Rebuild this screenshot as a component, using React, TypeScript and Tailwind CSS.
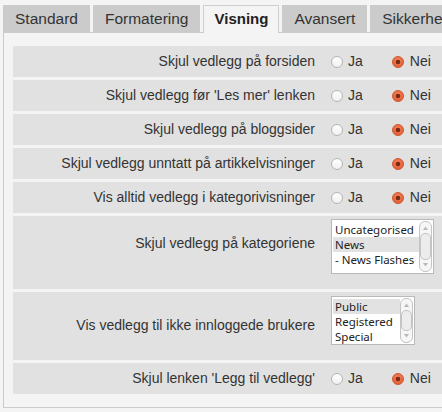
import React from "react";

const tabs = ["Standard", "Formatering", "Visning", "Avansert", "Sikkerhet"];

function Radio({ checked }: { checked?: boolean }) {
  if (checked) {
    return (
      <svg width="12" height="12" viewBox="0 0 12 12" className="shrink-0">
        <defs>
          <radialGradient id="rg" cx="50%" cy="40%" r="60%">
            <stop offset="0%" stopColor="#f58a60" />
            <stop offset="100%" stopColor="#e2582f" />
          </radialGradient>
        </defs>
        <circle cx="6" cy="6" r="5.5" fill="url(#rg)" stroke="#cf5a36" />
        <circle cx="6" cy="6" r="2.3" fill="#7a2a14" />
      </svg>
    );
  }
  return (
    <svg width="12" height="12" viewBox="0 0 12 12" className="shrink-0">
      <defs>
        <linearGradient id="wg" x1="0" y1="0" x2="0" y2="1">
          <stop offset="0%" stopColor="#ffffff" />
          <stop offset="100%" stopColor="#f0f0f0" />
        </linearGradient>
      </defs>
      <circle cx="6" cy="6" r="5.5" fill="url(#wg)" stroke="#b4b4b4" />
    </svg>
  );
}

function YesNo() {
  return (
    <div className="flex items-center ml-[16px] text-[14px] text-[#333]">
      <label className="flex items-center gap-[5px]">
        <Radio />
        <span>Ja</span>
      </label>
      <label className="flex items-center gap-[6px] ml-[29px]">
        <Radio checked />
        <span>Nei</span>
      </label>
    </div>
  );
}

function Scrollbar() {
  return (
    <div className="w-[13px] h-full flex flex-col items-center border border-[#c4c4c4] rounded-[6px] bg-[#f6f6f6]">
      <svg width="7" height="8" viewBox="0 0 7 8" className="mt-[2px]">
        <path d="M1 6 L3.5 2.5 L6 6 Z" fill="#b8b8b8" />
      </svg>
      <div className="flex-1 w-[11px] my-[1px] rounded-[5px] border border-[#c4c4c4] bg-[#ececec]" />
      <svg width="7" height="8" viewBox="0 0 7 8" className="mb-[2px]">
        <path d="M1 2 L3.5 5.5 L6 2 Z" fill="#b8b8b8" />
      </svg>
    </div>
  );
}

function ListBox({
  items,
  selected,
  width,
  height,
}: {
  items: string[];
  selected: number;
  width: string;
  height: string;
}) {
  return (
    <div
      className={`${width} ${height} flex bg-white border border-[#b9b9b9] p-[1px] font-['Noto_Sans',sans-serif] text-[11.5px] leading-[15px] text-[#222]`}
    >
      <div className="flex-1 flex flex-col pt-[1px]">
        {items.map((it, i) => (
          <div
            key={it}
            className={`h-[15px] pl-[2px] whitespace-nowrap ${i === selected ? "bg-[#e2e2e2]" : ""}`}
          >
            {it}
          </div>
        ))}
      </div>
      <Scrollbar />
    </div>
  );
}

function Row({ label }: { label: string }) {
  return (
    <div className="h-[31px] bg-[#e1e1e1] flex items-center">
      <div className="w-[302px] text-right text-[14px] text-[#333] whitespace-nowrap">
        {label}
      </div>
      <YesNo />
    </div>
  );
}

export default function App() {
  return (
    <div className="w-[442px] h-[412px] overflow-hidden bg-[#f4f4f4] font-['Liberation_Sans',Arial,sans-serif]">
      <div className="w-[470px] pt-[5px] pl-[3px]">
        <div className="flex gap-[3px] h-[27px] relative z-10">
          {tabs.map((t) =>
            t === "Visning" ? (
              <div
                key={t}
                className="h-[28px] px-[10px] flex items-center bg-[#f4f4f4] border border-b-0 border-[#cfcfcf] text-[15px] font-bold text-[#222]"
              >
                {t}
              </div>
            ) : (
              <div
                key={t}
                className="h-[27px] px-[12px] flex items-center bg-[#cbcbcb] text-[15.5px] text-[#333]"
              >
                {t}
              </div>
            )
          )}
        </div>
        <div className="border border-[#cbcbcb] bg-[#f4f4f4] pt-[13px] pb-[13px] pl-[9px] flex flex-col gap-[3px]">
          <Row label="Skjul vedlegg på forsiden" />
          <Row label="Skjul vedlegg før 'Les mer' lenken" />
          <Row label="Skjul vedlegg på bloggsider" />
          <Row label="Skjul vedlegg unntatt på artikkelvisninger" />
          <Row label="Vis alltid vedlegg i kategorivisninger" />
          <div className="h-[73px] bg-[#e1e1e1] flex items-start">
            <div className="w-[302px] pt-[19px] text-right text-[14px] leading-[16px] text-[#333] whitespace-nowrap">
              Skjul vedlegg på kategoriene
            </div>
            <div className="ml-[16px] mt-[3px]">
              <ListBox
                items={["Uncategorised", "News", "- News Flashes"]}
                selected={1}
                width="w-[103px]"
                height="h-[55px]"
              />
            </div>
          </div>
          <div className="h-[68px] bg-[#e1e1e1] flex items-start">
            <div className="w-[302px] pt-[25px] text-right text-[14px] leading-[16px] text-[#333] whitespace-nowrap">
              Vis vedlegg til ikke innloggede brukere
            </div>
            <div className="ml-[16px] mt-[4px]">
              <ListBox
                items={["Public", "Registered", "Special"]}
                selected={0}
                width="w-[84px]"
                height="h-[49px]"
              />
            </div>
          </div>
          <Row label="Skjul lenken 'Legg til vedlegg'" />
        </div>
      </div>
    </div>
  );
}
